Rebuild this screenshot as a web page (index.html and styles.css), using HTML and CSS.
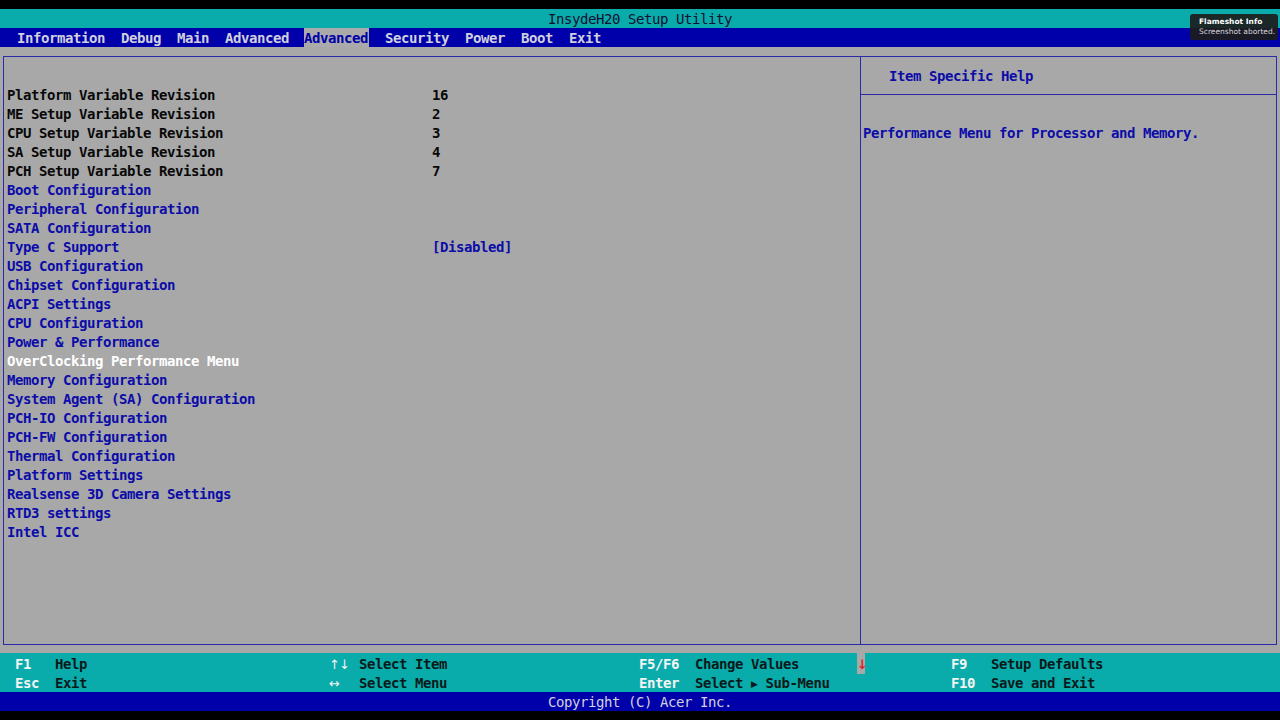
FILE: index.html
```html
<!DOCTYPE html>
<html lang="en">
<head>
    <meta charset="UTF-8">
    <title>InsydeH20 Setup Utility</title>
    <link rel="stylesheet" href="styles.css">
</head>
<body>
    <div class="screen">
        <div class="titlebar">InsydeH20 Setup Utility</div>

        <div class="menubar">
            <span>Information</span>
            <span>Debug</span>
            <span>Main</span>
            <span>Advanced</span>
            <span class="active">Advanced</span>
            <span>Security</span>
            <span>Power</span>
            <span>Boot</span>
            <span>Exit</span>
        </div>

        <div class="main">
            <div class="frame">
                <!-- Setup items -->
                <div class="items">
                    <div class="row info"><span>Platform Variable Revision</span><span>16</span></div>
                    <div class="row info"><span>ME Setup Variable Revision</span><span>2</span></div>
                    <div class="row info"><span>CPU Setup Variable Revision</span><span>3</span></div>
                    <div class="row info"><span>SA Setup Variable Revision</span><span>4</span></div>
                    <div class="row info"><span>PCH Setup Variable Revision</span><span>7</span></div>
                    <div class="row"><span>Boot Configuration</span></div>
                    <div class="row"><span>Peripheral Configuration</span></div>
                    <div class="row"><span>SATA Configuration</span></div>
                    <div class="row"><span>Type C Support</span><span>[Disabled]</span></div>
                    <div class="row"><span>USB Configuration</span></div>
                    <div class="row"><span>Chipset Configuration</span></div>
                    <div class="row"><span>ACPI Settings</span></div>
                    <div class="row"><span>CPU Configuration</span></div>
                    <div class="row"><span>Power &amp; Performance</span></div>
                    <div class="row selected"><span>OverClocking Performance Menu</span></div>
                    <div class="row"><span>Memory Configuration</span></div>
                    <div class="row"><span>System Agent (SA) Configuration</span></div>
                    <div class="row"><span>PCH-IO Configuration</span></div>
                    <div class="row"><span>PCH-FW Configuration</span></div>
                    <div class="row"><span>Thermal Configuration</span></div>
                    <div class="row"><span>Platform Settings</span></div>
                    <div class="row"><span>Realsense 3D Camera Settings</span></div>
                    <div class="row"><span>RTD3 settings</span></div>
                    <div class="row"><span>Intel ICC</span></div>
                </div>

                <!-- Help panel -->
                <div class="help">
                    <div class="help-head">Item Specific Help</div>
                    <div class="help-body">Performance Menu for Processor and Memory.</div>
                </div>
            </div>
        </div>

        <div class="keys">
            <span class="key">F1</span><span class="desc">Help</span>
            <span class="key arrows">↑↓</span><span class="desc">Select Item</span>
            <span class="key">F5/F6</span><span class="desc">Change Values</span>
            <span class="scroll">↓</span><span></span>
            <span class="key">F9</span><span class="desc">Setup Defaults</span>

            <span class="key">Esc</span><span class="desc">Exit</span>
            <span class="key arrows">↔</span><span class="desc">Select Menu</span>
            <span class="key">Enter</span><span class="desc">Select <span class="tri">▶</span> Sub-Menu</span>
            <span></span><span></span>
            <span class="key">F10</span><span class="desc">Save and Exit</span>
        </div>

        <div class="copyright">Copyright (C) Acer Inc.</div>
    </div>

    <div class="toast">
        <div class="toast-title">Flameshot Info</div>
        <div class="toast-text">Screenshot aborted.</div>
    </div>
</body>
</html>
```

FILE: styles.css
```css
body {
    margin: 0;
    background-color: #000;
    font-family: 'DejaVu Sans Mono', 'Liberation Mono', monospace;
    font-size: 14px;
    font-weight: bold;
    letter-spacing: -0.43px;
    line-height: 19px;
    width: 1280px;
    height: 720px;
    overflow: hidden;
}

.screen {
    padding-top: 9px;
}

.titlebar {
    height: 18px;
    padding-top: 1px;
    background-color: #0aabab;
    color: #101030;
    font-weight: normal;
    text-align: center;
}

.menubar {
    height: 19px;
    background-color: #0000aa;
    color: #d0d0dc;
    display: flex;
    gap: 16px;
    padding-left: 17px;
}

.menubar span {
    padding-top: 1px;
}

.menubar .active {
    background-color: #aaaaaa;
    color: #0000a8;
    margin-left: -1px;
    padding: 1px 1px 0 0;
}

.main {
    height: 606px;
    box-sizing: border-box;
    background-color: #a8a8a8;
    padding: 9px 3px 8px 3px;
}

.frame {
    height: 100%;
    box-sizing: border-box;
    border: 1px solid #2a2aa8;
    display: grid;
    grid-template-columns: 857px 1fr;
}

.items {
    border-right: 1px solid #2a2aa8;
    padding: 29px 0 0 3px;
}

.row {
    display: grid;
    grid-template-columns: 425px 1fr;
    height: 19px;
    color: #0c0ca8;
}

.row.info { color: #080808; }
.row.selected { color: #fff; }

.help-head {
    padding: 10px 0 8px 28px;
    border-bottom: 1px solid #2a2aa8;
    color: #0c0ca8;
}

.help-body {
    padding: 29px 0 0 2px;
    color: #0c0ca8;
}

.keys {
    height: 39px;
    box-sizing: border-box;
    padding: 2px 0 0 15px;
    background-color: #0aabab;
    display: grid;
    grid-template-columns: 40px 274px 30px 280px 56px 162px 8px 86px 40px 1fr;
    grid-auto-rows: 19px;
}

.key { color: #f4f4f4; }
.desc { color: #0a1a1a; }

.arrows {
    font-family: 'DejaVu Sans', sans-serif;
    font-weight: normal;
    font-size: 13px;
    letter-spacing: -1px;
}

.tri {
    font-family: 'DejaVu Sans', sans-serif;
    font-size: 9px;
    vertical-align: 1px;
}

.scroll {
    background-color: #a8a8a8;
    color: #e02020;
    font-family: 'DejaVu Sans', sans-serif;
    font-size: 13px;
    text-align: center;
    margin-top: -2px;
    padding-top: 2px;
}

.copyright {
    height: 18px;
    padding-top: 1px;
    background-color: #0000aa;
    color: #d0d0dc;
    font-weight: normal;
    text-align: center;
}

.toast {
    position: absolute;
    left: 1190px;
    top: 14px;
    width: 88px;
    height: 26px;
    box-sizing: border-box;
    padding: 3px 0 0 9px;
    background-color: rgba(28, 28, 28, 0.92);
    border-radius: 3px;
    font-family: 'DejaVu Sans', sans-serif;
    font-weight: normal;
    letter-spacing: 0;
    font-size: 7.5px;
    line-height: 10px;
}

.toast-title {
    color: #fff;
    font-weight: bold;
}

.toast-text {
    color: #d8d8d8;
}
```
